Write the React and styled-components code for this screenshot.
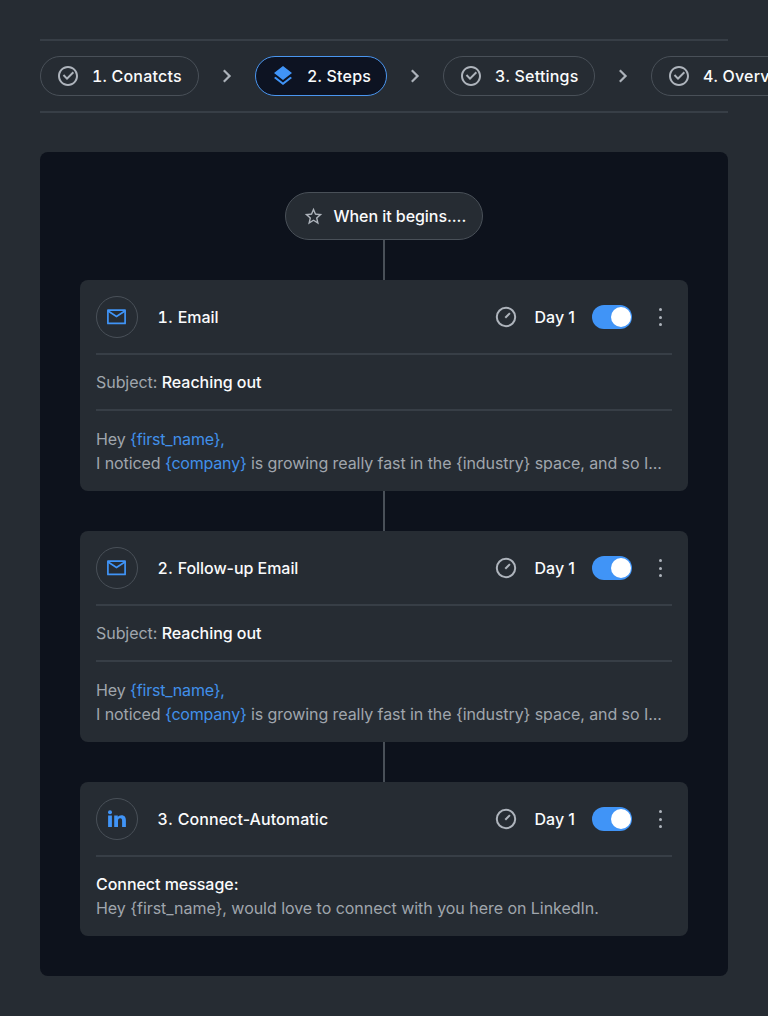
import React from "react";
import styled, { createGlobalStyle, css } from "styled-components";
import { RiCheckboxCircleLine, RiArrowRightSLine } from "react-icons/ri";
import { MdLayers, MdStarBorder } from "react-icons/md";

const GlobalStyle = createGlobalStyle`
  * { box-sizing: border-box; }
  body {
    margin: 0;
    overflow: hidden;
    background: #262c33;
    color: #fafbfc;
    font-family: Inter, "Liberation Sans", sans-serif;
    font-size: 16px;
    line-height: 24px;
  }
`;

const Page = styled.main`
  width: 768px;
  height: 1016px;
  padding: 39px 40px 40px;
  overflow: hidden;
`;

const StepBar = styled.nav`
  display: flex;
  align-items: center;
  gap: 16px;
  height: 74px;
  border-top: 2px solid #373e46;
  border-bottom: 2px solid #373e46;
`;

const StepPill = styled.div`
  flex: none;
  display: flex;
  align-items: center;
  gap: 12px;
  width: ${(p) => p.$width}px;
  height: 40px;
  padding: 0 15px;
  border: 1px solid #495058;
  border-radius: 20px;
  font-weight: 500;
  font-variant-numeric: tabular-nums;
  letter-spacing: 0.2px;
  white-space: nowrap;
  svg { flex: none; color: #aeb4bc; }
  ${(p) => p.$active && css`
    background: #0d1322;
    border-color: #4a96f0;
    svg { color: #4094f7; }
  `}
`;

const Chevron = styled(RiArrowRightSLine)`
  flex: none;
  color: #aeb4bc;
  stroke: currentColor;
  stroke-width: 0.3px;
`;

const Canvas = styled.section`
  display: flex;
  flex-direction: column;
  align-items: center;
  height: 824px;
  margin-top: 39px;
  padding: 40px;
  background: #0d121c;
  border-radius: 8px;
`;

const Trigger = styled.div`
  flex: none;
  display: flex;
  align-items: center;
  gap: 9.5px;
  width: 198px;
  height: 48px;
  padding-left: 17px;
  border: 1px solid #495058;
  border-radius: 24px;
  background: #262c33;
  font-weight: 500;
  letter-spacing: -0.05px;
  white-space: nowrap;
  svg { flex: none; color: #aeb4bc; }
`;

const Connector = styled.div`
  flex: none;
  width: 2px;
  height: 40px;
  background: #495058;
`;

const Card = styled.article`
  flex: none;
  width: 608px;
  padding: 16px;
  border-radius: 8px;
  background: #262c33;
`;

const CardHeader = styled.header`
  display: flex;
  align-items: center;
  height: 42px;
  margin-bottom: 15px;
`;

const IconRing = styled.div`
  display: flex;
  align-items: center;
  justify-content: center;
  width: 42px;
  height: 42px;
  margin-right: 19.5px;
  border: 1px solid #495058;
  border-radius: 50%;
  color: #4094f7;
`;

const CardTitle = styled.h2`
  flex: 1;
  margin: 0;
  font-size: 16px;
  font-weight: 500;
  letter-spacing: ${(p) => p.$tracking}px;
`;

const StepNumber = styled.span`
  font-variant-numeric: tabular-nums;
  letter-spacing: 0.4px;
`;

const DayLabel = styled.span`
  margin: 0 17px 0 16.5px;
  font-weight: 500;
`;

const Toggle = styled.div`
  display: flex;
  justify-content: flex-end;
  width: 40px;
  height: 24px;
  padding: 2px 1.5px;
  border-radius: 12px;
  background: #4094f7;
`;

const Knob = styled.div`
  width: 20px;
  height: 20px;
  border-radius: 50%;
  background: #fff;
`;

const MenuDots = styled.div`
  display: flex;
  flex-direction: column;
  align-items: center;
  gap: 4.5px;
  width: 24px;
  margin-left: 16px;
`;

const Dot = styled.i`
  width: 3px;
  height: 3px;
  border-radius: 50%;
  background: #aeb4bc;
`;

const Rule = styled.div`
  height: 2px;
  background: #373e46;
`;

const Subject = styled.p`
  margin: 15px 0;
  color: #a0a6ad;
  letter-spacing: -0.05px;
`;

const Message = styled.p`
  margin: ${(p) => p.$top}px 0 0;
  color: #a0a6ad;
  white-space: nowrap;
  letter-spacing: ${(p) => p.$tracking}px;
`;

const Strong = styled.span`
  color: #fafbfc;
  font-weight: 500;
`;

const Variable = styled.span`
  color: #4190ea;
  letter-spacing: -0.2px;
`;

const MailIcon = () => (
  <svg width="24" height="24" viewBox="0 0 24 24" fill="none" stroke="currentColor" strokeWidth="1.7">
    <path d="M2.9 5.2h17.2v13.2H2.9z" strokeLinejoin="round" />
    <path d="M3.1 6 11.5 11.4 19.9 6" />
  </svg>
);

const LinkedInIcon = () => (
  <svg width="24" height="24" viewBox="0 0 24 24" fill="currentColor">
    <circle cx="5" cy="5.2" r="2" />
    <path d="M3.1 8.6h3.8V20H3.1zM9.2 8.6h3.6v1.6c.7-1.2 1.9-1.9 3.6-1.9 3.4 0 4.5 2.1 4.5 5.2V20h-3.8v-5.9c0-1.6-.3-2.8-1.9-2.8-1.7 0-2.2 1.2-2.2 2.8V20H9.2z" />
  </svg>
);

const GaugeIcon = () => (
  <svg width="24" height="24" viewBox="0 0 24 24" fill="none" stroke="#aeb4bc" strokeWidth="2">
    <circle cx="12" cy="12" r="9.2" />
    <path d="m11.3 12.7 4.6-4.6" />
  </svg>
);

const steps = [
  { label: "1. Conatcts", width: 159 },
  { label: "2. Steps", width: 132, active: true },
  { label: "3. Settings", width: 152 },
  { label: "4. Overview", width: 162 },
];

function StepCard({ number, title, tracking, icon, children }) {
  return (
    <Card>
      <CardHeader>
        <IconRing>{icon}</IconRing>
        <CardTitle $tracking={tracking}>
          <StepNumber>{`${number}. `}</StepNumber>{title}
        </CardTitle>
        <GaugeIcon />
        <DayLabel>Day 1</DayLabel>
        <Toggle role="switch" aria-checked="true"><Knob /></Toggle>
        <MenuDots><Dot /><Dot /><Dot /></MenuDots>
      </CardHeader>
      <Rule />
      {children}
    </Card>
  );
}

function EmailCard({ number, title }) {
  return (
    <StepCard number={number} title={title} tracking={-0.05} icon={<MailIcon />}>
      <Subject>Subject: <Strong>Reaching out</Strong></Subject>
      <Rule />
      <Message $top={16} $tracking={-0.075}>
        Hey <Variable>{"{first_name},"}</Variable><br />
        I noticed <Variable>{"{company}"}</Variable>
        {" is growing really fast in the {industry} space, and so I..."}
      </Message>
    </StepCard>
  );
}

export default function App() {
  return (
    <Page>
      <GlobalStyle />
      <StepBar>
        {steps.map((s, i) => (
          <React.Fragment key={s.label}>
            {i > 0 && <Chevron size={24} />}
            <StepPill $width={s.width} $active={s.active}>
              {s.active ? <MdLayers size={24} /> : <RiCheckboxCircleLine size={24} />}
              {s.label}
            </StepPill>
          </React.Fragment>
        ))}
      </StepBar>
      <Canvas>
        <Trigger><MdStarBorder size={21} />When it begins....</Trigger>
        <Connector />
        <EmailCard number={1} title="Email" />
        <Connector />
        <EmailCard number={2} title="Follow-up Email" />
        <Connector />
        <StepCard number={3} title="Connect-Automatic" tracking={0.08} icon={<LinkedInIcon />}>
          <Message $top={15} $tracking={-0.04}>
            <Strong>Connect message:</Strong><br />
            {"Hey {first_name}, would love to connect with you here on LinkedIn."}
          </Message>
        </StepCard>
      </Canvas>
    </Page>
  );
}
